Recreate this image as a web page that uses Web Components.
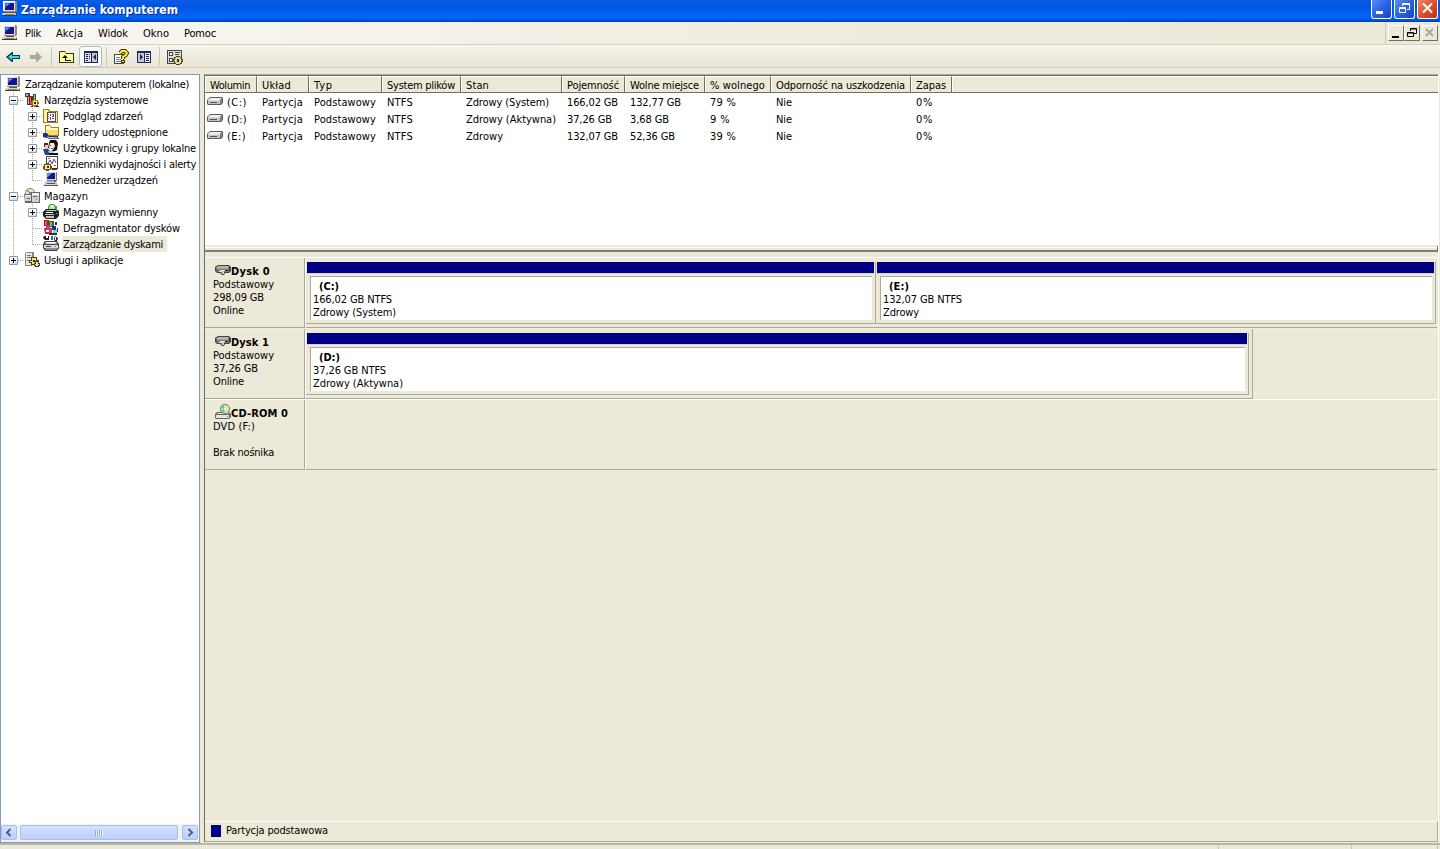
<!DOCTYPE html>
<html lang="pl">
<head>
<meta charset="utf-8">
<title>Zarządzanie komputerem</title>
<style>
    html, body {
        margin: 0;
        height: 100%;
        overflow: hidden;
    }
    body {
        --face: #ece9d8;
        --shadow: #aca899;
        --dark: #716f64;
        --navy: #000084;
        background: var(--face);
        color: #000;
        font: 11px/13px "DejaVu Sans Condensed", "DejaVu Sans", "Open Sans", sans-serif;
        font-stretch: condensed;
        cursor: default;
    }
</style>
</head>
<body>
<mmc-window>
    <title-bar slot="title"><ui-label width="157">Zarządzanie komputerem</ui-label></title-bar>
    <menu-bar slot="menu">
        <ui-label width="16">Plik</ui-label>
        <ui-label width="27">Akcja</ui-label>
        <ui-label width="30">Widok</ui-label>
        <ui-label width="26">Okno</ui-label>
        <ui-label width="32">Pomoc</ui-label>
    </menu-bar>
    <tool-bar slot="toolbar"></tool-bar>
    <tree-view slot="tree">
        <tree-node icon="computer"><ui-label width="164">Zarządzanie komputerem (lokalne)</ui-label></tree-node>
        <tree-node guides="minus" icon="tools"><ui-label width="104">Narzędzia systemowe</ui-label></tree-node>
        <tree-node guides="line plus" icon="events"><ui-label width="80">Podgląd zdarzeń</ui-label></tree-node>
        <tree-node guides="line plus" icon="shared"><ui-label width="105">Foldery udostępnione</ui-label></tree-node>
        <tree-node guides="line plus" icon="users"><ui-label width="133">Użytkownicy i grupy lokalne</ui-label></tree-node>
        <tree-node guides="line plus" icon="logs"><ui-label width="133">Dzienniki wydajności i alerty</ui-label></tree-node>
        <tree-node guides="line end" icon="devices"><ui-label width="95">Menedżer urządzeń</ui-label></tree-node>
        <tree-node guides="minus" icon="storage"><ui-label width="44">Magazyn</ui-label></tree-node>
        <tree-node guides="line plus" icon="removable"><ui-label width="95">Magazyn wymienny</ui-label></tree-node>
        <tree-node guides="line tee" icon="defrag"><ui-label width="117">Defragmentator dysków</ui-label></tree-node>
        <tree-node guides="line end" icon="diskmgmt" selected><ui-label width="100">Zarządzanie dyskami</ui-label></tree-node>
        <tree-node guides="pluslast" icon="services"><ui-label width="79">Usługi i aplikacje</ui-label></tree-node>
    </tree-view>
    <volume-table slot="detail"></volume-table>
    <disk-row slot="disks" icon="disk" extent="1132">
        <ui-label slot="name" width="39">Dysk 0</ui-label>
        <ui-label slot="info" width="61">Podstawowy</ui-label>
        <ui-label slot="info" width="51">298,09 GB</ui-label>
        <ui-label slot="info" width="31">Online</ui-label>
        <disk-partition style="width:570px">
            <ui-label slot="name" width="20">(C:)</ui-label>
            <ui-label width="79">166,02 GB NTFS</ui-label>
            <ui-label width="83">Zdrowy (System)</ui-label>
        </disk-partition>
        <disk-partition style="width:560px">
            <ui-label slot="name" width="20">(E:)</ui-label>
            <ui-label width="79">132,07 GB NTFS</ui-label>
            <ui-label width="36">Zdrowy</ui-label>
        </disk-partition>
    </disk-row>
    <disk-row slot="disks" icon="disk" extent="948" partial>
        <ui-label slot="name" width="38">Dysk 1</ui-label>
        <ui-label slot="info" width="61">Podstawowy</ui-label>
        <ui-label slot="info" width="45">37,26 GB</ui-label>
        <ui-label slot="info" width="31">Online</ui-label>
        <disk-partition style="width:943px">
            <ui-label slot="name" width="21">(D:)</ui-label>
            <ui-label width="73">37,26 GB NTFS</ui-label>
            <ui-label width="90">Zdrowy (Aktywna)</ui-label>
        </disk-partition>
    </disk-row>
    <disk-row slot="disks" icon="cdrom" extent="1132">
        <ui-label slot="name" width="57">CD-ROM 0</ui-label>
        <ui-label slot="info" width="42">DVD (F:)</ui-label>
        <ui-label slot="info" width="0"></ui-label>
        <ui-label slot="info" width="61">Brak nośnika</ui-label>
    </disk-row>
    <ui-label slot="legend" width="102">Partycja podstawowa</ui-label>
</mmc-window>

<script>
const ICONS = {
    computer: `
        <path fill="#8d8a82" d="M2 0h12l1 1v9l-1 1H2z"/><path fill="#dedbd2" d="M1 0h12v10H1z"/>
        <path fill="#fff" d="M1 0h12v1H2v9H1z"/><path fill="#14148c" d="M3 2h9v7H3z"/><path fill="#3c62d0" d="M3 2h6L3 7z"/><path fill="#8fb0f4" d="M4 3h2v1H4z"/>
        <path fill="#55534c" d="M4 11h8v1H4z"/><path fill="#d5d2c8" d="M1 12h12l2 2H0v-1z"/><path fill="#3a3a3a" d="M0 14h15v1H0zM14 12l1 2v1h-1z"/>
        <path fill="#8a877c" d="M3 13h9v1H3z"/>`,
    tools: `
        <path fill="#444" d="M1 1h5v3H5v9H3V5H1z"/><path fill="#b5b5b5" d="M2 2h2v2H2zM4 5h1v7H4z"/>
        <path fill="#901818" d="M5 4h4v9H5z"/><path fill="#f05050" d="M6 5h1v7H6z"/><path fill="#176b3a" d="M9 2h3v8H9z"/><path fill="#7cd0a0" d="M10 3h1v5h-1z"/>
        <path fill="#8a7010" d="M8 8h6v6H8zM10 7h2v8h-2zM7 10h8v2H7z"/><path fill="#ffe98a" d="M9 9h4v4H9zM10 8h1v1h-1z"/><path fill="#222" d="M10 10h2v2h-2zM7 14h2v1H7zM12 14h3v1h-3z"/>`,
    events: `
        <path fill="#9c8412" d="M0 1h6l1 2h8v12H0z"/><path fill="#ffee9a" d="M1 2h4l1 2h8v10H1z"/><path fill="#55514a" d="M4 4h9v10H4z"/>
        <path fill="#fff" d="M5 5h7v8H5z"/><path fill="#b52e2e" d="M7 6h1v2H7zM7 9h1v3H7z"/><path fill="#4a4ab0" d="M9 6h2v1H9zM10 7h1v2h-2V8h1zM9 10h2v1H9z"/><path fill="#888" d="M5 6h1v1H5zM5 8h1v1H5zM5 10h1v1H5z"/>`,
    shared: `
        <path fill="#9c8412" d="M2 1h5l1 2h8v9H2z"/><path fill="#fff8b8" d="M3 2h4l1 2h7v7H3z"/><path fill="#f5dc6c" d="M4 6h11v5H4z"/>
        <path fill="#1c2e86" d="M0 9h4l2 3h9v2H4l-4-1z"/><path fill="#a5bdea" d="M4 12l2 1h8v1H5z"/><path fill="#666" d="M5 14h11v1H5z"/>`,
    users: `
        <path fill="#111" d="M7 0h6l2 3-1 7-4 2-2-3-3-1 1-5z"/><path fill="#f8ead8" d="M7 3h4l1 3-2 4H7L6 7z"/>
        <path fill="#333" d="M1 3h4v4H1zM7 5h1v1H7z"/><path fill="#f2c9a0" d="M2 5h3v4H2z"/><path fill="#27418e" d="M0 9h5l3 3v3H2z"/>
        <path fill="#a8c8f4" d="M5 11h7l-2 2H6z"/><path fill="#111" d="M6 13h9v2H6z"/><path fill="#b33" d="M8 8h2v1H8z"/>`,
    logs: `
        <path fill="#444" d="M3 0h12v13H3z"/><path fill="#fff" d="M4 1h10v11H4z"/><path fill="none" stroke="#5b3ab0" d="M5 8l2-4 2 4 2-5 2 4"/>
        <path fill="#d13b3b" d="M5 2h2v1H5zM11 9h2v1h-2z"/><path fill="#6d5400" d="M1 8h7v6H1zM3 7h3v8H3zM0 10h9v3H0z"/><path fill="#ffe98a" d="M2 9h5v4H2z"/><path fill="#333" d="M4 10h2v2H4zM9 12h5v2H9z"/>`,
    devices: `
        <path fill="#777" d="M4 0h10v9H4z"/><path fill="#dedbd2" d="M3 0h10v8H3z"/><path fill="#14148c" d="M4 1h8v6H4z"/><path fill="#5f8cf0" d="M4 1h5L4 6z"/>
        <path fill="#c4c4c4" d="M3 9h10l2 4H1z"/><path fill="#556" d="M4 11h8v1H4zM1 13h14v1H1z"/><path fill="#3c58ac" d="M11 9h2v1h-2z"/><path fill="#dcdcdc" d="M3 12h9v1H3z"/>`,
    storage: `
        <circle cx="6" cy="5" r="5" fill="#888"/><circle cx="6" cy="5" r="4" fill="#dff0c8"/><path fill="#70c068" d="M6 5L2 3l2-2z"/><circle cx="6" cy="5" r="1" fill="#666"/>
        <path fill="#666" d="M0 6h7V4h9v11H1z"/><path fill="#d0d0d0" d="M1 7h6v6H1zM8 5h7v9H8z"/><path fill="#f4f4f4" d="M8 5h7v2H8zM1 7h6v1H1z"/><path fill="#666" d="M9 8h4v1H9zM3 10h3v1H3z"/><path fill="#3a3" d="M12 11h1v1h-1z"/>`,
    removable: `
        <circle cx="9" cy="4" r="4" fill="#488b30"/><circle cx="9" cy="4" r="3" fill="#b7e8a0"/><path fill="#fff" d="M9 4l-1-3h3z"/>
        <path fill="#222" d="M3 5h10l3 2v5l-3 3H3l-3-3V8z"/><path fill="#c4c4c4" d="M4 6h9l1 1H3zM2 10h9v1H2zM3 12h8v2H3z"/><path fill="#fff" d="M3 8h7v1H3z"/><path fill="#39a050" d="M12 2h2v3h-2zM13 9h2v1h-2z"/>`,
    defrag: `
        <path fill="#b01818" d="M1 0h5v6H1z"/><path fill="#ee5555" d="M2 1h2v4H2z"/><path fill="#147a26" d="M6 1h5v6H6z"/><path fill="#59cc64" d="M7 2h2v4H7z"/>
        <path fill="#a040a0" d="M3 5h4v5H3z"/><path fill="#1c2c9d" d="M9 6h4v4H9z"/><path fill="#c22" d="M1 8h2v4h3v2H2z"/><path fill="#e33" d="M6 8h3v5H6z"/>
        <path fill="#333" d="M12 2h2v3h-2zM6 13h8v2H6z"/><path fill="#69d8e0" d="M10 10h4v3h-4z"/><path fill="#333" d="M14 8h1v4h-1z"/>`,
    diskmgmt: `
        <path fill="#222" d="M1 0h2v2h2V0h1v4H2L0 2zM12 0l3 2-1 3-2 1-1-3z"/><path fill="#2b6ad0" d="M8 0h2v4H8z"/><path fill="#eee" d="M12 1h1v3h-1z"/>
        <path fill="#444" d="M2 5h12l2 3v4l-2 3H2l-2-3V8z"/><path fill="#d8d8d8" d="M3 6h10l1 2H2zM1 9h14v3H1z"/><path fill="#fff" d="M3 6h9v1H3z"/><path fill="#909090" d="M2 12h12v2H3z"/><path fill="#444" d="M3 10h5v1H3zM6 8h5v1H6z"/><path fill="#3a3" d="M12 10h1v1h-1z"/>`,
    services: `
        <path fill="#888" d="M1 1l2-1h7v12l-2 2H1z"/><path fill="#e8e6de" d="M2 1h6v12H2z"/><path fill="#777" d="M3 3h4v1H3zM3 5h4v1H3zM3 8h2v1H3z"/>
        <path fill="#554200" d="M7 5h6v8H7zM5 8h10v3H5z"/><path fill="#f9e480" d="M8 6h4v6H8zM6 9h8v1H6z"/><path fill="#222" d="M9 8h2v2H9z"/>
        <path fill="#444" d="M11 9h4v6h-4zM10 11h6v3h-6z"/><path fill="#e5e0b0" d="M12 10h2v4h-2zM11 12h4v1h-4z"/>`,
    back: `<path fill="#003b48" d="M0 8l6-5h1v3h7v4H7v3H6z"/><path fill="#42d7e5" d="M2 8l4-3v2h7v2H6v2z"/>`,
    forward: `<path fill="#aaa79c" d="M14 8l-5 5H8v-3H2V6h6V3h1z"/>`,
    folderup: `<path fill="#3b3600" d="M1 2h5l1 2h8v10H0V3z"/><path fill="#fffba6" d="M1 3h5l1 2h7v8H1z"/><path fill="#111" d="M6 6l3 3H7v2h5v1H6V9H3z"/>`,
    treepane: `<path fill="#24245c" d="M1 2h14v12H1z"/><path fill="#dad9e8" d="M2 4h6v9H2z"/><path fill="#c4c6de" d="M9 4h5v9H9z"/><path fill="#222" d="M3 5h2v1H3zM3 7h2v1H3zM3 9h2v1H3zM3 11h2v1H3zM6 5h1v1H6zM6 7h1v1H6zM6 9h1v1H6zM13 5v6l-3-3z"/>`,
    actionpane: `<path fill="#24245c" d="M1 2h14v12H1z"/><path fill="#c4c6de" d="M2 4h6v9H2z"/><path fill="#ececf5" d="M9 4h5v9H9z"/><path fill="#222" d="M10 5h3v1h-3zM10 7h3v1h-3zM10 9h3v1h-3zM10 11h3v1h-3zM4 5v6l3-3z"/>`,
    help: `
        <path fill="#444" d="M1 5h10v10H1z"/><path fill="#fff" d="M2 6h8v8H2z"/><path fill="#777" d="M3 8h4v1H3zM3 10h5v1H3zM3 12h5v1H3z"/>
        <path fill="none" stroke="#3b3600" stroke-width="4" d="M7 4l2-2h3l2 2-1 2-3 2v2"/><path fill="none" stroke="#ffef3f" stroke-width="2" d="M7 4l2-2h3l2 2-1 2-3 2v2"/><path fill="#3b3600" d="M8 11h4v3H8z"/><path fill="#ffef3f" d="M9 12h2v1H9z"/>`,
    settings: `
        <path fill="#444" d="M0 1h15v14H0z"/><path fill="#deddd6" d="M1 2h13v12H1z"/><path fill="#444" d="M2 3h4v4H2zM2 9h4v4H2zM8 3h5v1H8zM8 5h4v1H8z"/><path fill="#fff" d="M3 4h2v2H3zM3 10h2v2H3z"/>
        <path fill="#4a4210" d="M9 7h4v9H9zM6 10h10v3H6zM7 8h8v7H7z"/><path fill="#e3d998" d="M9 8h4v7H9zM7 11h8v1H7zM8 9h6v5H8z"/><path fill="#333" d="M10 10h2v3h-2z"/>`,
    volume: `<path fill="#5c5c5c" d="M3 3h12l1 1v5l-2 2H1l-1-1V6z"/><path fill="#f0f0f0" d="M3 4h12l-2 2H1z"/><path fill="#c4c4c4" d="M1 6h12v4H1z"/><path fill="#dcdcdc" d="M1 6h12v1H1z"/><path fill="#808080" d="M13 6l2-2v5l-2 1z"/><path fill="#555" d="M3 8h7v1H3z"/>`,
    disk: `<path fill="#444" d="M3 3h11l2 2v4l-2 2h-4l-1 2H7l-2-2H2L0 9V5z"/><path fill="#b4b4b4" d="M3 4h11l-1 2H1z"/><path fill="#7c7c7c" d="M1 6h13v4H2z"/><path fill="#a4a4a4" d="M2 6h11v1H2z"/><path fill="#e8e8e8" d="M5 8h5v1H5zM4 9h2v1H4z"/><path fill="#d6d4a0" d="M6 9h3v3H7z"/><path fill="#222" d="M10 8h3v1h-3z"/>`,
    cdrom: `<path fill="#666" d="M2 8h12l2 2v3l-2 2H1l-1-1v-4z"/><path fill="#e4e4e4" d="M1 11h13v3H1zM3 9h11l-1 1H2z"/><circle cx="10" cy="5" r="5" fill="#777"/><circle cx="10" cy="5" r="4" fill="#c9f0c0"/><path fill="#f6ea50" d="M10 5l3-3 1 3z"/><path fill="#50b8d8" d="M10 5L6 4l2-3z"/><path fill="#67c94b" d="M10 5l-1 4-3-3z"/><circle cx="10" cy="5" r="1" fill="#fff"/><path fill="#3a3" d="M12 12h1v1h-1z"/>`
};

function define(name, html, setup) {
    customElements.define(name, class extends HTMLElement {
        constructor() {
            super();
            this.attachShadow({ mode: 'open' }).innerHTML = html;
        }
        connectedCallback() {
            if (setup && !this.ready) {
                this.ready = true;
                setup(this, this.shadowRoot);
            }
        }
    });
}

define('ui-icon', `
    <style>
        :host { display: block; flex: none; width: 16px; height: 16px; }
        svg { display: block; width: 100%; height: 100%; }
    </style>
    <svg viewBox="0 0 16 16"></svg>
`, (el, root) => {
    root.querySelector('svg').innerHTML = ICONS[el.getAttribute('name')];
});

// A single line of text, tracked so that it fills the given width
define('ui-label', `
    <style>
        :host { display: block; flex: none; white-space: nowrap; min-height: 13px; }
        span { display: inline-block; }
    </style>
    <span><slot></slot></span>
`, (el, root) => {
    const width = Number(el.getAttribute('width'));
    const span = root.querySelector('span');
    const count = el.textContent.trim().length;
    el.style.width = width + 'px';
    requestAnimationFrame(() => fit());
    fit();
    function fit() {
        if (!count) return;
        span.style.letterSpacing = '0px';
        const natural = span.getBoundingClientRect().width;
        span.style.letterSpacing = (width - natural) / count + 'px';
    }
});

define('title-bar', `
    <style>
        :host {
            display: flex;
            align-items: center;
            height: 22px;
            padding: 0 2px 0 2px;
            box-sizing: border-box;
            background: linear-gradient(#0a5de8, #0054dd 25%, #005ef2 55%, #0064fb 80%, #0052d8 92%, #003cb4);
            color: #fff;
            font-size: 12px;
            font-weight: bold;
            text-shadow: 1px 1px #0a2a80;
        }
        .text { flex: 1; padding: 0 0 2px 3px; }
        ui-icon { margin-bottom: 5px; }
        .buttons { display: flex; gap: 2px; align-self: flex-start; }
        .buttons svg {
            width: 21px;
            height: 19px;
            box-sizing: border-box;
            border: 1px solid #fff;
            border-top: 0;
            border-radius: 0 0 3px 3px;
            background: linear-gradient(135deg, #5b8ef5, #2a62e4 50%, #1746c4);
        }
        .buttons svg.close { background: linear-gradient(135deg, #ee8a68, #dd5030 50%, #b93515); }
    </style>
    <ui-icon name="computer"></ui-icon>
    <div class="text"><slot></slot></div>
    <div class="buttons">
        <svg viewBox="0 0 19 18"><path fill="#fff" d="M4 11h7v3H4z"/></svg>
        <svg viewBox="0 0 19 18"><path fill="none" stroke="#fff" d="M7.500 6V3.500h7v6H12M4.500 7.500h6v5h-6zM7 4.500h7M5 8.500h5"/></svg>
        <svg class="close" viewBox="0 0 19 18"><path fill="none" stroke="#fff" stroke-width="2" d="M5 3.500l9 9M14 3.500l-9 9"/></svg>
    </div>
`);

define('menu-bar', `
    <style>
        :host {
            display: flex;
            align-items: center;
            height: 23px;
            box-sizing: border-box;
            padding: 0 2px;
            border-bottom: 1px solid #d5d2c2;
            background: linear-gradient(90deg, #f8f7f2, #efecdf 60%, var(--face));
        }
        .items { display: flex; flex: 1; gap: 15px; padding-left: 7px; }
        .mdi { display: flex; align-items: center; border-left: 1px solid #d0cdbf; padding-left: 2px; height: 22px; }
        .mdi svg {
            width: 16px;
            height: 16px;
            box-sizing: border-box;
            background: var(--face);
            border: 1px solid;
            border-color: #fff var(--dark) var(--dark) #fff;
        }
        .mdi svg:last-child { margin-left: 2px; }
    </style>
    <ui-icon name="computer"></ui-icon>
    <div class="items"><slot></slot></div>
    <div class="mdi">
        <svg viewBox="0 0 14 14"><path d="M3 10h7v2H3z"/></svg>
        <svg viewBox="0 0 14 14"><path fill="none" stroke="#000" d="M5.500 5V2.500h6v5H9M2.500 6.500h6v4h-6zM5 3h7M2 7h7"/></svg>
        <svg viewBox="0 0 14 14"><path fill="none" stroke="#aca899" stroke-width="2" d="M3 3l7 7M10 3l-7 7"/></svg>
    </div>
`);

define('tool-bar', `
    <style>
        :host {
            display: flex;
            align-items: center;
            height: 23px;
            box-sizing: border-box;
            padding: 1px 0 0 6px;
            border-bottom: 1px solid #cfccbc;
            background: linear-gradient(#f6f5ee, #efede1 50%, #e9e6d6);
        }
        .sep { width: 1px; height: 19px; background: #cbc8b8; }
        .pressed {
            display: flex;
            align-items: center;
            justify-content: center;
            width: 23px;
            height: 21px;
            box-sizing: border-box;
            border: 1px solid #a9b9ce;
            border-radius: 3px;
            background: #fff;
        }
    </style>
    <ui-icon name="back"></ui-icon>
    <ui-icon name="forward" style="margin:0 7px 0 6px"></ui-icon>
    <div class="sep"></div>
    <ui-icon name="folderup" style="margin:0 4px 0 7px"></ui-icon>
    <div class="pressed"><ui-icon name="treepane"></ui-icon></div>
    <div class="sep" style="margin:0 6px 0 4px"></div>
    <ui-icon name="help"></ui-icon>
    <ui-icon name="actionpane" style="margin:0 7px"></ui-icon>
    <div class="sep"></div>
    <ui-icon name="settings" style="margin-left:7px"></ui-icon>
`);

define('scroll-bar', `
    <style>
        :host { display: flex; height: 18px; background: #f3f3ee; padding: 1px 0 2px; gap: 3px; box-sizing: border-box; }
        div, svg {
            height: 15px;
            box-sizing: border-box;
            border: 1px solid #a9bef0;
            border-radius: 2px;
            background: linear-gradient(#d3e0fe, #bccffb);
        }
        svg { width: 16px; }
        .thumb { width: 158px; display: flex; align-items: center; justify-content: center; margin-right: 1px; }
        .grip { width: 8px; height: 6px; border: 0; border-radius: 0; background: repeating-linear-gradient(90deg, #8ca8ea 0 1px, #eef4fe 1px 2px); }
    </style>
    <svg viewBox="0 0 14 13"><path fill="none" stroke="#4d6185" stroke-width="2" d="M8.500 3L5 6.500 8.500 10"/></svg>
    <div class="thumb"><div class="grip"></div></div>
    <svg viewBox="0 0 14 13"><path fill="none" stroke="#4d6185" stroke-width="2" d="M5.500 3L9 6.500 5.500 10"/></svg>
`);

define('tree-view', `
    <style>
        :host {
            display: flex;
            flex-direction: column;
            width: 200px;
            box-sizing: border-box;
            border: 1px solid #7f9db9;
            background: #fff;
            overflow: hidden;
        }
        .nodes { flex: 1; padding: 1px 0 0 4px; }
    </style>
    <div class="nodes"><slot></slot></div>
    <scroll-bar></scroll-bar>
`);

const DOTS = 'stroke="#a8a498" stroke-dasharray="1 1" fill="none"';
const BOX = '<path fill="#fff" stroke="#8a99ad" d="M4.500 4.500h8v8h-8z"/><path fill="#e2dfd3" d="M6 10h6v2H6z"/><path stroke="#000" d="M6 8.500h5"/>';
const PLUS = '<path stroke="#000" d="M8.500 6v5"/>';
const GUIDES = {
    line: `<path ${DOTS} d="M8.500 0v16"/>`,
    tee: `<path ${DOTS} d="M8.500 0v16M9 8.500h10"/>`,
    end: `<path ${DOTS} d="M8.500 0v9M9 8.500h10"/>`,
    minus: `<path ${DOTS} d="M8.500 0v16M9 8.500h10"/>${BOX}`,
    plus: `<path ${DOTS} d="M8.500 0v16M9 8.500h10"/>${BOX}${PLUS}`,
    pluslast: `<path ${DOTS} d="M8.500 0v9M9 8.500h10"/>${BOX}${PLUS}`
};

define('tree-node', `
    <style>
        :host { display: flex; height: 16px; }
        .guides { display: flex; }
        .guides svg { width: 19px; height: 16px; }
        .text { height: 16px; box-sizing: border-box; margin-left: 3px; padding: 2px 4px 1px 1px; }
        :host([selected]) .text { background: var(--face); }
    </style>
    <div class="guides"></div>
    <ui-icon></ui-icon>
    <div class="text"><slot></slot></div>
`, (el, root) => {
    const guides = (el.getAttribute('guides') || '').split(' ').filter(Boolean);
    root.querySelector('.guides').innerHTML = guides.map(g => `<svg viewBox="0 0 19 16">${GUIDES[g]}</svg>`).join('');
    const icon = document.createElement('ui-icon');
    icon.setAttribute('name', el.getAttribute('icon'));
    root.querySelector('ui-icon').replaceWith(icon);
});

const COLUMNS = [
    ['Wolumin', 40], ['Układ', 29], ['Typ', 19], ['System plików', 68], ['Stan', 23], ['Pojemność', 52],
    ['Wolne miejsce', 69], ['% wolnego', 55], ['Odporność na uszkodzenia', 129], ['Zapas', 30]
];
const VOLUMES = [
    [['(C:)', 20], ['Partycja', 41], ['Podstawowy', 62], ['NTFS', 26], ['Zdrowy (System)', 83], ['166,02 GB', 51], ['132,77 GB', 51], ['79 %', 26], ['Nie', 16], ['0%', 17]],
    [['(D:)', 20], ['Partycja', 41], ['Podstawowy', 62], ['NTFS', 26], ['Zdrowy (Aktywna)', 90], ['37,26 GB', 45], ['3,68 GB', 39], ['9 %', 20], ['Nie', 16], ['0%', 17]],
    [['(E:)', 19], ['Partycja', 41], ['Podstawowy', 62], ['NTFS', 26], ['Zdrowy', 37], ['132,07 GB', 51], ['52,36 GB', 45], ['39 %', 26], ['Nie', 16], ['0%', 17]]
];

define('volume-table', `
    <style>
        :host { display: block; height: 169px; background: #fff; }
        .head, .row {
            display: grid;
            grid-template-columns: 52px 52px 73px 79px 101px 63px 80px 66px 140px 41px 1fr;
        }
        .head {
            height: 17px;
            box-sizing: border-box;
            background: var(--face);
            border-bottom: 1px solid var(--dark);
            margin-bottom: 1px;
        }
        .head div { padding: 2px 0 0 4px; border-left: 1px solid #fff; border-top: 1px solid #fff; border-right: 1px solid var(--dark); }
        .head div:last-child { border-right: 0; }
        .row { height: 17px; }
        .row div { display: flex; padding: 2px 0 0 5px; }
        .row div:first-child { padding: 2px 0 0 2px; gap: 4px; }
        .row ui-icon { margin-top: -2px; }
    </style>
    <div class="head"></div>
    <div class="body"></div>
`, (el, root) => {
    const label = ([text, width]) => `<ui-label width="${width}">${text}</ui-label>`;
    root.querySelector('.head').innerHTML = COLUMNS.map(c => `<div>${label(c)}</div>`).join('') + '<div></div>';
    root.querySelector('.body').innerHTML = VOLUMES.map(row =>
        '<div class="row">' + row.map((c, i) => `<div>${i ? '' : '<ui-icon name="volume"></ui-icon>'}${label(c)}</div>`).join('') + '</div>'
    ).join('');
});

define('disk-partition', `
    <style>
        :host {
            display: block;
            flex: none;
            height: 62px;
            box-sizing: border-box;
            padding-left: 1px;
            border-right: 1px solid var(--shadow);
            border-bottom: 1px solid var(--shadow);
        }
        .bar { height: 11px; margin-right: 1px; background: var(--navy); border-bottom: 1px solid #d6d4d4; }
        .box {
            height: 44px;
            box-sizing: border-box;
            margin: 2px 3px 0;
            padding: 3px 0 0 2px;
            border-top: 1px solid var(--shadow);
            border-left: 1px solid var(--shadow);
            background: #fff;
        }
        .name { padding-left: 6px; font-weight: bold; }
    </style>
    <div class="bar"></div>
    <div class="box">
        <div class="name"><slot name="name"></slot></div>
        <slot></slot>
    </div>
`);

define('disk-row', `
    <style>
        :host { display: flex; height: 71px; box-sizing: border-box; border-top: 1px solid #fff; }
        :host([partial]) { border-top-color: #f1efe3; }
        .head {
            width: 100px;
            box-sizing: border-box;
            padding: 7px 0 0 8px;
            border-right: 1px solid var(--shadow);
            border-bottom: 1px solid var(--shadow);
        }
        .name { display: flex; height: 13px; padding-left: 2px; font-weight: bold; }
        .name ui-icon { margin-top: -3px; }
        .body {
            display: flex;
            box-sizing: border-box;
            padding-top: 4px;
            border-left: 1px solid #fff;
            border-bottom: 1px solid var(--shadow);
        }
        :host([partial]) .body { border-right: 1px solid var(--shadow); }
    </style>
    <div class="head">
        <div class="name"><ui-icon></ui-icon><slot name="name"></slot></div>
        <slot name="info"></slot>
    </div>
    <div class="body"><slot></slot></div>
`, (el, root) => {
    const icon = document.createElement('ui-icon');
    icon.setAttribute('name', el.getAttribute('icon'));
    root.querySelector('ui-icon').replaceWith(icon);
    root.querySelector('.body').style.width = el.getAttribute('extent') + 'px';
});

define('mmc-window', `
    <style>
        :host { display: flex; flex-direction: column; width: 1440px; height: 849px; overflow: hidden; }
        .work { display: flex; gap: 4px; height: 769px; margin-top: 6px; }
        .detail {
            display: flex;
            flex-direction: column;
            width: 1235px;
            height: 768px;
            box-sizing: border-box;
            border-left: 1px solid var(--dark);
            border-top: 1px solid var(--shadow);
            border-bottom: 1px solid var(--shadow);
            border-right: 1px solid #fff;
        }
        .top { border-top: 1px solid var(--dark); }
        .split {
            height: 7px;
            box-sizing: border-box;
            margin: 0 0 5px;
            border-top: 2px solid var(--face);
            border-bottom: 2px solid #807d70;
            border-right: 1px solid var(--dark);
            background: linear-gradient(#fff 1px, var(--face) 1px);
        }
        .disks { flex: 1; }
        .legend {
            display: flex;
            align-items: center;
            height: 20px;
            box-sizing: border-box;
            padding: 0 0 2px 6px;
            gap: 5px;
            border-top: 1px solid #fff;
            border-right: 1px solid var(--shadow);
        }
        .legend i { width: 10px; height: 12px; background: var(--navy); }
        .status { display: flex; height: 6px; box-sizing: border-box; border-top: 2px solid #b8b5a6; }
        .status div { border-right: 1px solid #c8c5b6; }
    </style>
    <slot name="title"></slot>
    <slot name="menu"></slot>
    <slot name="toolbar"></slot>
    <div class="work">
        <slot name="tree"></slot>
        <div class="detail">
            <div class="top"><slot name="detail"></slot></div>
            <div class="split"></div>
            <div class="disks"><slot name="disks"></slot></div>
            <div class="legend"><i></i><slot name="legend"></slot></div>
        </div>
    </div>
    <div class="status"><div style="width:1218px"></div><div style="width:132px"></div><div style="width:85px"></div></div>
`);
</script>
</body>
</html>
